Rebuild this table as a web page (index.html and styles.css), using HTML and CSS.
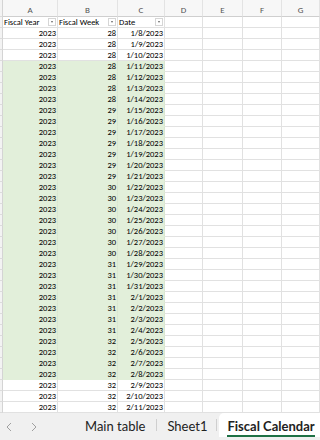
FILE: index.html
```html
<!DOCTYPE html>
<html>
<head>
<meta charset="utf-8">
<link rel="stylesheet" href="styles.css">
</head>
<body>
<div class="sheet">
  <div class="row colhdr">
    <div class="rh"></div><div class="c ctr">A</div><div class="c ctr">B</div><div class="c ctr">C</div><div class="c ctr">D</div><div class="c ctr">E</div><div class="c ctr">F</div><div class="c ctr">G</div>
  </div>
  <div class="row thead">
    <div class="rh"></div>
    <div class="c lft">Fiscal Year<span class="flt"></span></div>
    <div class="c lft">Fiscal Week<span class="flt"></span></div>
    <div class="c lft">Date<span class="flt"></span></div>
    <div class="c"></div><div class="c"></div><div class="c"></div><div class="c"></div>
  </div>
  <div class="row"><div class="rh"></div><div class="c n">2023</div><div class="c n">28</div><div class="c n">1/8/2023</div><div class="c"></div><div class="c"></div><div class="c"></div><div class="c"></div></div>
  <div class="row"><div class="rh"></div><div class="c n">2023</div><div class="c n">28</div><div class="c n">1/9/2023</div><div class="c"></div><div class="c"></div><div class="c"></div><div class="c"></div></div>
  <div class="row"><div class="rh"></div><div class="c n">2023</div><div class="c n">28</div><div class="c n">1/10/2023</div><div class="c"></div><div class="c"></div><div class="c"></div><div class="c"></div></div>
  <div class="row g"><div class="rh"></div><div class="c n">2023</div><div class="c n">28</div><div class="c n">1/11/2023</div><div class="c"></div><div class="c"></div><div class="c"></div><div class="c"></div></div>
  <div class="row g"><div class="rh"></div><div class="c n">2023</div><div class="c n">28</div><div class="c n">1/12/2023</div><div class="c"></div><div class="c"></div><div class="c"></div><div class="c"></div></div>
  <div class="row g"><div class="rh"></div><div class="c n">2023</div><div class="c n">28</div><div class="c n">1/13/2023</div><div class="c"></div><div class="c"></div><div class="c"></div><div class="c"></div></div>
  <div class="row g"><div class="rh"></div><div class="c n">2023</div><div class="c n">28</div><div class="c n">1/14/2023</div><div class="c"></div><div class="c"></div><div class="c"></div><div class="c"></div></div>
  <div class="row g"><div class="rh"></div><div class="c n">2023</div><div class="c n">29</div><div class="c n">1/15/2023</div><div class="c"></div><div class="c"></div><div class="c"></div><div class="c"></div></div>
  <div class="row g"><div class="rh"></div><div class="c n">2023</div><div class="c n">29</div><div class="c n">1/16/2023</div><div class="c"></div><div class="c"></div><div class="c"></div><div class="c"></div></div>
  <div class="row g"><div class="rh"></div><div class="c n">2023</div><div class="c n">29</div><div class="c n">1/17/2023</div><div class="c"></div><div class="c"></div><div class="c"></div><div class="c"></div></div>
  <div class="row g"><div class="rh"></div><div class="c n">2023</div><div class="c n">29</div><div class="c n">1/18/2023</div><div class="c"></div><div class="c"></div><div class="c"></div><div class="c"></div></div>
  <div class="row g"><div class="rh"></div><div class="c n">2023</div><div class="c n">29</div><div class="c n">1/19/2023</div><div class="c"></div><div class="c"></div><div class="c"></div><div class="c"></div></div>
  <div class="row g"><div class="rh"></div><div class="c n">2023</div><div class="c n">29</div><div class="c n">1/20/2023</div><div class="c"></div><div class="c"></div><div class="c"></div><div class="c"></div></div>
  <div class="row g"><div class="rh"></div><div class="c n">2023</div><div class="c n">29</div><div class="c n">1/21/2023</div><div class="c"></div><div class="c"></div><div class="c"></div><div class="c"></div></div>
  <div class="row g"><div class="rh"></div><div class="c n">2023</div><div class="c n">30</div><div class="c n">1/22/2023</div><div class="c"></div><div class="c"></div><div class="c"></div><div class="c"></div></div>
  <div class="row g"><div class="rh"></div><div class="c n">2023</div><div class="c n">30</div><div class="c n">1/23/2023</div><div class="c"></div><div class="c"></div><div class="c"></div><div class="c"></div></div>
  <div class="row g"><div class="rh"></div><div class="c n">2023</div><div class="c n">30</div><div class="c n">1/24/2023</div><div class="c"></div><div class="c"></div><div class="c"></div><div class="c"></div></div>
  <div class="row g"><div class="rh"></div><div class="c n">2023</div><div class="c n">30</div><div class="c n">1/25/2023</div><div class="c"></div><div class="c"></div><div class="c"></div><div class="c"></div></div>
  <div class="row g"><div class="rh"></div><div class="c n">2023</div><div class="c n">30</div><div class="c n">1/26/2023</div><div class="c"></div><div class="c"></div><div class="c"></div><div class="c"></div></div>
  <div class="row g"><div class="rh"></div><div class="c n">2023</div><div class="c n">30</div><div class="c n">1/27/2023</div><div class="c"></div><div class="c"></div><div class="c"></div><div class="c"></div></div>
  <div class="row g"><div class="rh"></div><div class="c n">2023</div><div class="c n">30</div><div class="c n">1/28/2023</div><div class="c"></div><div class="c"></div><div class="c"></div><div class="c"></div></div>
  <div class="row g"><div class="rh"></div><div class="c n">2023</div><div class="c n">31</div><div class="c n">1/29/2023</div><div class="c"></div><div class="c"></div><div class="c"></div><div class="c"></div></div>
  <div class="row g"><div class="rh"></div><div class="c n">2023</div><div class="c n">31</div><div class="c n">1/30/2023</div><div class="c"></div><div class="c"></div><div class="c"></div><div class="c"></div></div>
  <div class="row g"><div class="rh"></div><div class="c n">2023</div><div class="c n">31</div><div class="c n">1/31/2023</div><div class="c"></div><div class="c"></div><div class="c"></div><div class="c"></div></div>
  <div class="row g"><div class="rh"></div><div class="c n">2023</div><div class="c n">31</div><div class="c n">2/1/2023</div><div class="c"></div><div class="c"></div><div class="c"></div><div class="c"></div></div>
  <div class="row g"><div class="rh"></div><div class="c n">2023</div><div class="c n">31</div><div class="c n">2/2/2023</div><div class="c"></div><div class="c"></div><div class="c"></div><div class="c"></div></div>
  <div class="row g"><div class="rh"></div><div class="c n">2023</div><div class="c n">31</div><div class="c n">2/3/2023</div><div class="c"></div><div class="c"></div><div class="c"></div><div class="c"></div></div>
  <div class="row g"><div class="rh"></div><div class="c n">2023</div><div class="c n">31</div><div class="c n">2/4/2023</div><div class="c"></div><div class="c"></div><div class="c"></div><div class="c"></div></div>
  <div class="row g"><div class="rh"></div><div class="c n">2023</div><div class="c n">32</div><div class="c n">2/5/2023</div><div class="c"></div><div class="c"></div><div class="c"></div><div class="c"></div></div>
  <div class="row g"><div class="rh"></div><div class="c n">2023</div><div class="c n">32</div><div class="c n">2/6/2023</div><div class="c"></div><div class="c"></div><div class="c"></div><div class="c"></div></div>
  <div class="row g"><div class="rh"></div><div class="c n">2023</div><div class="c n">32</div><div class="c n">2/7/2023</div><div class="c"></div><div class="c"></div><div class="c"></div><div class="c"></div></div>
  <div class="row g"><div class="rh"></div><div class="c n">2023</div><div class="c n">32</div><div class="c n">2/8/2023</div><div class="c"></div><div class="c"></div><div class="c"></div><div class="c"></div></div>
  <div class="row"><div class="rh"></div><div class="c n">2023</div><div class="c n">32</div><div class="c n">2/9/2023</div><div class="c"></div><div class="c"></div><div class="c"></div><div class="c"></div></div>
  <div class="row"><div class="rh"></div><div class="c n">2023</div><div class="c n">32</div><div class="c n">2/10/2023</div><div class="c"></div><div class="c"></div><div class="c"></div><div class="c"></div></div>
  <div class="row"><div class="rh"></div><div class="c n">2023</div><div class="c n">32</div><div class="c n">2/11/2023</div><div class="c"></div><div class="c"></div><div class="c"></div><div class="c"></div></div>
</div>
<div class="tabs">
  <div class="nav">
    <svg width="6" height="10" viewBox="0 0 6 10"><path d="M5 1 L1 5 L5 9" fill="none" stroke="#a0a0a0" stroke-width="1"/></svg>
    <svg width="6" height="10" viewBox="0 0 6 10"><path d="M1 1 L5 5 L1 9" fill="none" stroke="#a0a0a0" stroke-width="1"/></svg>
  </div>
  <div class="tab">Main table</div>
  <div class="sep"></div>
  <div class="tab mid">Sheet1</div>
  <div class="sep"></div>
  <div class="tab active"><span>Fiscal Calendar</span></div>
</div>
</body>
</html>
```
FILE: styles.css
```css
* { box-sizing: border-box; }
html, body { margin: 0; padding: 0; }
body {
  width: 320px;
  height: 440px;
  overflow: hidden;
  background: #fff;
  font-family: Calibri, Carlito, Lato, "Liberation Sans", sans-serif;
  color: #000;
}
.sheet { height: 413px; overflow: hidden; }
.row {
  display: grid;
  grid-template-columns: 3px 55px 60px 47px 38px 40px 39px 1fr;
  height: 11px;
}
.c {
  border-right: 1px solid #e1e1e1;
  border-bottom: 1px solid #e1e1e1;
  font-size: 8.5px;
  line-height: 10px;
  white-space: nowrap;
  overflow: hidden;
}
.rh {
  background: #f3f3f3;
  border-right: 1px solid #d4d4d4;
  border-bottom: 1px solid #dcdcdc;
}
.colhdr { height: 17px; }
.colhdr .c {
  background: #f7f7f7;
  border-bottom: 1px solid #cfcfcf;
  border-right: 1px solid #e3e3e3;
  color: #555;
  font-size: 9px;
  line-height: 19px;
}
.ctr { text-align: center; }
.thead .lft {
  display: flex;
  align-items: center;
  justify-content: space-between;
  padding-left: 1px;
  padding-right: 1px;
}
.flt {
  width: 8px;
  height: 8px;
  border: 1px solid #d6d6d6;
  background: #fff;
  position: relative;
}
.flt::after {
  content: "";
  position: absolute;
  left: 2px;
  top: 2px;
  border-left: 1.5px solid transparent;
  border-right: 1.5px solid transparent;
  border-top: 2px solid #666;
}
.n { text-align: right; padding-right: 1px; }
.g .c:nth-child(2), .g .c:nth-child(3), .g .c:nth-child(4) {
  background: #e2efda;
  border-bottom-color: #e2efda;
  border-right-color: #d9e6d1;
}
.tabs {
  height: 27px;
  background: #f0f0f0;
  display: flex;
  align-items: stretch;
  font-family: Lato, "Segoe UI", "Liberation Sans", sans-serif;
  font-size: 13px;
  color: #222;
  white-space: nowrap;
  overflow: hidden;
}
.nav {
  width: 85px;
  flex: none;
  display: flex;
  align-items: center;
  gap: 19px;
  padding-left: 6px;
}
.tab {
  flex: none;
  display: flex;
  align-items: center;
  padding: 0 11px 2px 0;
}
.tab.mid { padding-left: 10px; padding-right: 9px; }
.sep {
  flex: none;
  width: 1px;
  background: #cfcfcf;
  margin: 6px 0 9px;
}
.tab.active {
  background: #fff;
  margin-left: 2px;
  margin-bottom: 3px;
  border-radius: 5px 0 0 0;
  padding: 0 0 0 8px;
  flex: 1 0 auto;
  font-weight: 700;
}
.tab.active span {
  border-bottom: 2px solid #1e7145;
  padding-bottom: 1px;
  margin-top: 4px;
}
```
